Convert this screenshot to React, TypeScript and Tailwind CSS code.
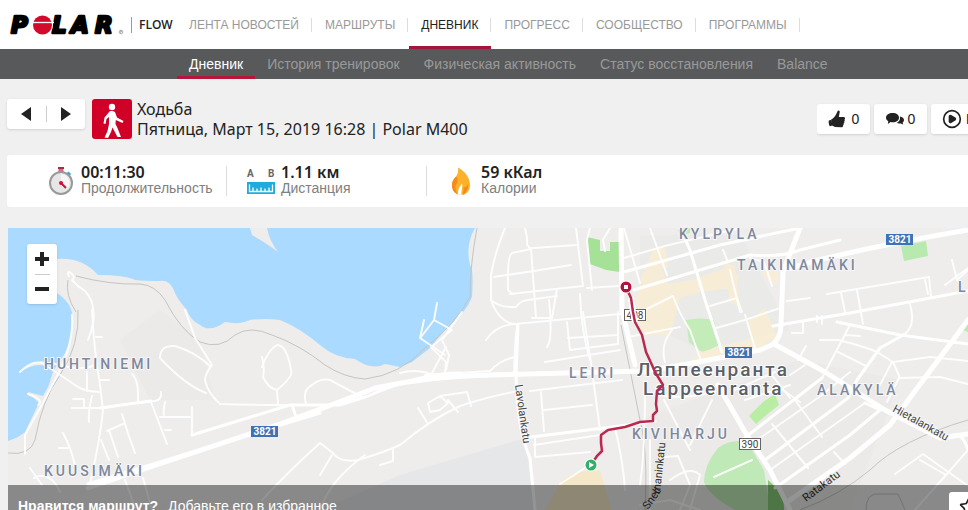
import React from 'react';
import { CirclePlay, Star } from 'lucide-react';

const MAIN_NAV = ['ЛЕНТА НОВОСТЕЙ', 'МАРШРУТЫ', 'ДНЕВНИК', 'ПРОГРЕСС', 'СООБЩЕСТВО', 'ПРОГРАММЫ'];
const SUB_NAV = ['Дневник', 'История тренировок', 'Физическая активность', 'Статус восстановления', 'Balance'];

const Logo = () => (
  <svg width="116" height="32" viewBox="8 8 116 32" role="img" aria-label="Polar" className="overflow-visible">
    <g fontFamily="DejaVu Sans, sans-serif" fontWeight="700" fontStyle="italic" fontSize="23" fill="#000" stroke="#000" strokeWidth="2.500" strokeLinejoin="round">
      <text x="11" y="32">P</text>
      <text x="52" y="32">L</text>
      <text x="71" y="32">A</text>
      <text x="95" y="32">R</text>
    </g>
    <circle cx="42.500" cy="24" r="10.500" fill="#fff" />
    <circle cx="42.500" cy="24" r="9.500" fill="#d40a2c" />
    <path d="M31 21.500H54" stroke="#fff" strokeWidth="1.300" />
    <circle cx="121" cy="31" r="1.800" fill="none" stroke="#777" strokeWidth=".6" />
    <path d="M120.500 32V30H121.500V31H120.500" fill="none" stroke="#777" strokeWidth=".4" />
  </svg>
);

const WalkIcon = () => (
  <svg width="40" height="40" viewBox="0 0 40 40" className="shrink-0 rounded-[3px] bg-[#d10027]" aria-hidden="true">
    <circle cx="20" cy="8" r="3.200" fill="#fff" />
    <path
      d="M17.500 12.500C19 11.800 21.500 11.800 23 13L25 18.500L31.500 22L30.500 24L23.800 21L23.500 25L25.500 29L29 38H25.500L20.500 28.500L19 33L16 39L12.500 38.500L15.500 32L17 25V18L14.500 20L13.500 25L11.500 24.500L12.500 18.500Z"
      fill="#fff"
      strokeLinejoin="round"
    />
  </svg>
);

const ThumbIcon = () => (
  <svg width="18" height="18" viewBox="0 0 18 18" fill="#222" aria-hidden="true">
    <path d="M9.800.8C11 .2 12 1 11.700 2.300L10.800 7H16C17.300 7.300 17.400 8.800 16.500 9.300C17 10 16.800 11 16.200 11.400C16.500 12.200 16.300 13 15.600 13.400C15.800 14.300 15.500 15 15 15.400C15.200 16.500 14.500 17.200 13.500 17.200L7.500 17C6 16.800 5 16 4 15.600L3.200 9.500C5.500 8.500 7.500 6 8.500 3.500Z" />
    <path d="M.8 10.500L3.500 9.700L4.500 15.500L1.800 16.300C1 15 .4 12.500 .8 10.500Z" />
  </svg>
);

const CommentsIcon = () => (
  <svg width="18" height="14" viewBox="0 0 18 14" fill="#222" aria-hidden="true">
    <path d="M13.800 4.500C16.500 4.800 18 6.200 18 8C18 9.200 17.400 10 16.700 10.600L17.200 12.600L14.800 11.500C13 11.800 11.500 11.500 10.500 10.800C13 10 14.600 7.600 13.800 4.500Z" />
    <path d="M6.700 1C10.500 1 13 3 13 5.700S10.500 10.300 6.700 10.300C6 10.300 5.200 10.200 4.600 10.100L1.800 12L2.300 9.200C.9 8.300 0 7.200 0 5.700C0 3 2.900 1 6.700 1Z" />
  </svg>
);

const StopwatchIcon = () => (
  <svg width="26" height="30" viewBox="0 0 26 30" aria-hidden="true">
    <path d="M10.500 3H15.500V6H10.500Z" fill="#c97288" />
    <path d="M10 1H16V3H10Z" fill="#a52a4b" />
    <path d="M19.500 6.500L22 9" stroke="#2ba8dc" strokeWidth="3" />
    <circle cx="13" cy="17" r="11" fill="#e6e6e6" stroke="#999" strokeWidth="2" />
    <path d="M13 8V17L19 23A9 9 0 0 0 13 8Z" fill="#f6f6f6" />
    <path d="M13 17L18 22" stroke="#d30b3f" strokeWidth="2" />
    <circle cx="13" cy="17" r="2" fill="#d30b3f" />
  </svg>
);

const DistanceIcon = () => (
  <svg width="28" height="28" viewBox="0 0 28 28" aria-hidden="true" className="overflow-visible">
    <g fontFamily="Roboto, sans-serif" fontWeight="700" fontSize="10" fill="#666">
      <text x="0" y="10">A</text>
      <text x="21" y="10">B</text>
    </g>
    <path d="M0 15H28V27H0Z" fill="#1fabdc" />
    <path d="M2.500 17.500V24.500H25.500V17.500M6 24V20.500M10 24V21.500M14 24V20.500M18 24V21.500M22 24V20.500" fill="none" stroke="#fff" strokeWidth="1.300" />
  </svg>
);

const FlameIcon = () => (
  <svg width="20" height="28" viewBox="0 0 20 28" aria-hidden="true">
    <path d="M7 .5C13.500 4 19 10.500 19 18C19 23 16.500 26 13 27.500H7C3.500 26 1 23 1 18.500C1 13.500 3 12 5 9.500C7 7 7.500 4 7 .5Z" fill="#fcb12b" />
    <path d="M1 18.500C1 14 3 12 5 9.500C7.500 12 7 15 5 18C4 20 4.500 24 7 27.500C3.500 26 1 23 1 18.500Z" fill="#f58b1f" />
    <path d="M13 27.500C16 25 17.500 21 17 17C16 19.500 14.500 20.500 12.500 20.500C13 22.500 12.500 25 11.500 27.500Z" fill="#f58b1f" />
    <path d="M11 16.500C9 19.500 6.500 22 7 27.500H10.500C10 24.500 12 20 11 16.500Z" fill="#fff" />
  </svg>
);

const STATS = [
  { icon: <StopwatchIcon />, value: '00:11:30', label: 'Продолжительность' },
  { icon: <DistanceIcon />, value: '1.11 км', label: 'Дистанция' },
  { icon: <FlameIcon />, value: '59 кКал', label: 'Калории' },
];

// Roads, grouped by width
const SMALL_ROADS = [
  // peninsula and Huhtiniemi
  'M69 276Q66 270 71 273Q76 277 72 280Q78 287 85 291Q93 300 93 309Q96 320 88 340',
  'M72 315Q74 340 60 370Q45 400 25 435L25 454',
  'M92 310Q94 350 100 385L103 410Q100 440 90 484',
  'M20 372Q32 360 42 363Q65 378 75 385Q82 391 99 392M52 363Q85 373 95 364',
  'M28 394Q45 400 38 405M73 399H84V408H73M72 408H104Q130 403 155 401Q162 400 161 392',
  'M92 396Q88 412 89 422M87 372V391M96 337H102M100 380H109M132 374Q139 380 138 402',
  'M151 402L167 444M165 402Q163 412 164 415M160 417H192M192 407V435M165 430H171',
  'M122 414Q128 435 135 453M107 431L123 424M109 430L118 457M101 440L109 460M63 433Q72 450 75 466M59 448H68',
  'M30 468L42 485M34 478Q50 470 60 492M125 480L136 510M143 478L152 510',
  'M185 310L195 338L212 365Q206 372 205 380Q207 392 220 404Q250 405 290 405',
  'M206 393Q185 385 160 358Q160 345 175 346Q195 352 210 366',
  'M262 357Q265 370 263 377Q268 388 277 390Q294 376 291 370Q287 345 277 345Q268 350 262 367M277 390L278 405M306 404Q302 390 312 385Q320 378 330 380L362 397',
  'M262 500Q290 470 320 443L333 453Q340 463 358 460Q385 452 400 445Q430 420 460 406Q490 396 514 392M320 510Q330 480 365 455M320 475L332 455M380 465L393 461V450',
  'M418 408L428 424M428 403L440 396L448 403L440 410L430 412L428 403M440 396L467 392L471 406M448 400L458 412',
  'M446 347L431 375M437 303L434 320L421 337M434 320L452 330L431 347L446 362L445 373',
  'M424 320L420 338L445 355M462 312L442 340L449 355L446 370',
  // Leiri and the blocks north of it
  'M505 228Q495 252 491 275V300Q500 325 518 324Q515 330 514 375',
  'M525 228Q528 240 527 245L531 249L512 253Q507 256 508 290L513 294',
  'M531 248L536 318M533 248L577 245M494 277L540 270L571 265M576 228L583 286L510 294M532 318H552L557 289',
  'M491 300Q500 308 516 307Q520 301 528 300L557 296M486 340Q496 325 515 324L620 314',
  'M590 228L587 240L592 290M620 350L545 362M580 294Q581 330 590 360M567 322L570 350L618 344V335',
  'M568 338L618 335V312M549 300Q553 340 547 347M610 228L603 240L605 251M587 288L618 286',
  'M530 391L622 380M541 392L544 431M544 410L592 405M534 445L600 435M535 437V457L590 452M560 484L588 466M615 428Q623 460 625 490',
  'M425 375L490 371Q500 360 515 357M400 373Q420 367 440 378M583 312L592 370L600 430',
  // centre
  'M624 228L640 283M650 228L667 275M624 258L665 246L740 228M723 250L728 262M730 270L740 312',
  'M645 310L673 296Q680 315 690 330L700 358M710 306L737 298L742 312M628 337L680 327M665 362Q660 345 672 330',
  'M716 328L745 320L780 308M745 315L755 348M750 258L764 262L772 286M645 390Q645 450 640 485M640 372L700 362',
  // Taikinamäki
  'M827 294L929 277L931 296M925 280L928 294M841 293L845 312M857 290L863 324M787 301L810 298M817 316V322M822 316V324M792 333H803V323',
  'M820 340H838Q860 345 877 352L893 362L930 357L968 361M850 325L822 378M838 352L866 366M845 335L860 336',
  'M893 362L900 378L940 377L968 384M892 362L880 385M899 378L887 402M910 304Q916 325 905 334M806 346L798 360',
  'M952 260L957 280L968 270M945 285L968 268',
  // Alakylä
  'M850 372L822 395L760 438M865 403L770 470M772 424L808 468M795 400L822 437M780 388L800 402M834 452L845 464',
  'M771 374L790 398M790 375L805 365M895 474L923 454L968 486M968 450L946 475L915 510M946 475L920 460',
  // Kiviharju
  'M660 395Q680 400 715 392M664 400L690 450M712 400L690 445M670 480Q690 465 700 475L690 510M714 477L752 460M665 457L678 456',
  'M678 456L690 485L680 510M650 440V510M700 510L670 500L640 505M735 390L775 372M745 400L790 385',
];

const MEDIUM_ROADS = [
  'M100 408L151 401M192 435L290 405H340L368 396Q420 373 460 373M88 484L320 413',
  'M518 325L516 375Q517 430 530 458L535 510M523 438L628 425L655 421',
  'M624 272L720 245L800 228M634 290L700 270L750 255Q780 258 800 250L840 240',
  'M680 228L690 250L705 300L722 352M773 326L850 313L968 291M837 322L900 335L968 344',
  'M822 378L760 426L742 440M905 334L880 348L857 380L848 398L765 460M880 410L850 435L775 488',
  'M865 403L880 410M292 405L296 417M968 450Q965 440 960 436',
];

const BIG_ROADS = [
  'M88 488L120 477L280 424Q340 402 375 388Q430 376 490 375L645 371Q680 366 760 350L772 345Q781 338 781 325L783 272L800 228',
  'M790 268Q850 250 968 230',
  'M774 344L825 372L885 410L940 438L968 434',
  'M718 385L745 432L770 470L790 510',
  'M621 228L622 310L635 365',
  'M968 320L912 395L890 425L850 458L790 500',
];

const DISTRICTS = [
  { x: 44, y: 369, text: 'HUHTINIEMI' },
  { x: 44, y: 476, text: 'KUUSIMÄKI' },
  { x: 569, y: 378, text: 'LEIRI' },
  { x: 679, y: 239, text: 'KYLPYLA' },
  { x: 737, y: 270, text: 'TAIKINAMÄKI' },
  { x: 817, y: 395, text: 'ALAKYLÄ' },
  { x: 632, y: 439, text: 'KIVIHARJU' },
  { x: 958, y: 292, text: 'L' },
];

const SHIELDS = [
  { x: 251, y: 426 },
  { x: 886, y: 234 },
  { x: 725, y: 347 },
];

const RouteMap = () => (
  <svg viewBox="8 228 960 300" preserveAspectRatio="xMinYMin slice" className="block h-full w-full" role="img" aria-label="Lappeenranta">
    <path d="M8 228H968V528H8Z" fill="#eeedec" />
    <g fill="#e9e8e7">
      <path d="M120 340L160 310L200 340L215 400H150Z" opacity=".7" />
      <path d="M320 510L400 475L525 438L535 510Z" fill="#e6e7e8" />
      <path d="M640 420L800 360L900 380L850 510H640Z" opacity=".7" />
      <path d="M640 235H740L790 330L700 350L640 320Z" opacity=".8" />
    </g>

    {/* Water */}
    <path
      d="M8 228H475Q465 245 470 265Q474 270 472 297Q466 313 447 327L430 348L412 362L400 367L385 364Q372 371 355 359Q335 358 320 345Q300 328 280 320Q265 318 250 320Q240 325 225 322Q210 333 200 325Q190 320 187 310Q178 300 175 293Q170 279 160 281Q145 281 135 280Q125 275 98 275Q82 257 57 259L45 270L57 293Q75 305 72 322Q73 345 59 362Q53 371 52 375L48 387L38 405L25 432Q20 437 8 441Z"
      fill="#aadaff"
    />
    <path d="M250 228H267Q269 240 278 252Q268 244 252 235Z" fill="#eeedec" />
    <path d="M19 373Q30 362 42 361L54 366L40 365Q30 365 19 373ZM28 392L43 396L40 405Q36 398 28 395Z" fill="#eeedec" />

    {/* Parks */}
    <g fill="#b8eab0">
      <path d="M587 237L600 240V251H610V242H620V272L606 270L590 264Z" fill="#a5e297" />
      <path d="M686 320Q700 317 714 320L719 345L703 353L689 342Z" fill="#c4ecb8" />
      <path d="M901 246L926 241L928 256L904 261Z" />
      <path d="M749 416L763 402L775 394L779 405L770 412L756 424Z" fill="#b9eda4" />
      <path d="M718 448Q728 440 742 441L752 450L764 470L770 510H735Q708 495 704 482Q704 465 718 448Z" fill="#bfe9b6" />
      <path d="M768 480Q785 495 784 510H768Z" fill="#86ca78" />
      <path d="M678 230L690 228V233L680 235ZM963 330L968 322V332Z" />
    </g>

    {/* Built-up areas */}
    <g fill="#fcefd0" opacity=".75">
      <path d="M643 272L660 266L668 284L692 280L725 268L740 276L730 288L700 292L680 298L670 335L640 335L636 300Z" />
      <path d="M643 270L648 262L655 246L665 248L668 268ZM724 262L735 266L740 308L730 302ZM747 322L765 308L770 320L777 338L752 347Z" />
      <path d="M700 352L750 340L770 345L720 358L690 362Z" />
      <path d="M762 272L778 270V284L770 283Z" />
      <path d="M560 483Q575 468 600 471L612 510H545Z" fill="#f7e7bd" />
    </g>

    {/* Railway and footpaths */}
    <g fill="none" stroke="#c4c4c4" strokeWidth="1">
      <path d="M477 228Q470 265 470 297Q455 325 425 348Q400 375 365 379Q345 378 325 365Q300 345 272 335Q250 325 235 335Q220 350 200 342Q180 330 165 300Q155 285 140 284Q110 285 76 276" />
      <path d="M621 325L640 420Q648 450 645 510M968 420Q900 440 870 470Q840 495 800 510M78 310Q80 345 60 375Q42 400 35 440Q30 456 8 453M68 280Q65 295 76 312" />
      <path d="M866 510Q866 492 880 494H898Q901 500 905 510" />
    </g>

    <g fill="none" stroke="#fff" strokeLinejoin="round" strokeLinecap="round">
      <g strokeWidth="2" opacity=".9">
        {SMALL_ROADS.map((d) => <path key={d} d={d} />)}
      </g>
      <g strokeWidth="3">
        {MEDIUM_ROADS.map((d) => <path key={d} d={d} />)}
      </g>
      <g strokeWidth="5">
        {BIG_ROADS.map((d) => <path key={d} d={d} />)}
      </g>
    </g>

    {/* Labels */}
    <g fontFamily="Roboto, sans-serif" fontSize="14" fontWeight="500" fill="#7e879b" className="tracking-[3px]" stroke="#f7f7f7" strokeWidth="2" paintOrder="stroke">
      {DISTRICTS.map((d) => <text key={d.text} x={d.x} y={d.y}>{d.text}</text>)}
    </g>
    <g fontFamily="Roboto, sans-serif" fontSize="19" fontWeight="500" fill="#5c5f66" className="tracking-[2px]" stroke="#fff" strokeWidth="2" paintOrder="stroke">
      <text x="637" y="376">Лаппеенранта</text>
      <text x="643" y="395">Lappeenranta</text>
    </g>
    <g fontFamily="Roboto, sans-serif" fontSize="11" fill="#444" stroke="#f7f7f7" strokeWidth="2" paintOrder="stroke">
      <text transform="translate(515 385) rotate(82)">Lavolankatu</text>
      <text transform="translate(892 411) rotate(29)">Hietalankatu</text>
    </g>
    <g fontFamily="Roboto, sans-serif" fontSize="10" textAnchor="middle">
      {SHIELDS.map((s) => (
        <g key={s.x}>
          <rect x={s.x} y={s.y} width="27" height="11" fill="#3f72b5" />
          <text x={s.x + 14} y={s.y + 9} fill="#fff" fontWeight="700">3821</text>
        </g>
      ))}
      <rect x="624.500" y="309.500" width="21" height="11" fill="#fff" stroke="#666" />
      <text x="635" y="319" fill="#444">408</text>
      <rect x="739.500" y="438.500" width="21" height="11" fill="#fff" stroke="#666" />
      <text x="750" y="448" fill="#444">390</text>
    </g>
    <g fontFamily="Roboto, sans-serif" fontSize="11" fill="#333">
      <text transform="translate(806 502) rotate(-37)">Ratakatu</text>
      <text transform="translate(648 510) rotate(-55)">Snell</text>
      <text transform="translate(660 494) rotate(-84)">maninkatu</text>
    </g>

    {/* Recorded route */}
    <g fill="none" strokeLinejoin="round">
      <path d="M631 298L633 312L635 322" stroke="#fff" strokeWidth="6" />
      <path
        d="M626 287L631 298L633 312L635 322L642 335L646 352L652 365L655 372L663 385L657 391L656 404L657 411L653 415V421L640 422L625 427L608 430L601 435V443L602 451L597 456L591 465"
        stroke="#b92a50"
        strokeWidth="2.500"
      />
    </g>
    <circle cx="626" cy="287" r="6.500" fill="#fff" />
    <circle cx="626" cy="287" r="5.500" fill="#b3143f" />
    <path d="M624 285H628V289H624Z" fill="#fff" />
    <circle cx="591" cy="465" r="6.500" fill="#fff" />
    <circle cx="591" cy="465" r="5.500" fill="#32b06b" />
    <path d="M589 462L594 465L589 468Z" fill="#fff" />
  </svg>
);

const App: React.FC = () => {
  return (
    <div className="h-screen overflow-hidden bg-[#f0f0f0] font-['Liberation_Sans',sans-serif] text-[#222]">
      <header className="flex h-[49px] items-center bg-white">
        <a href="#" className="ml-2 shrink-0">
          <Logo />
        </a>
        <a href="#" className="ml-[7px] w-[46px] shrink-0 border-l border-[#999] pl-[7px] font-['Open_Sans',sans-serif] text-[12px] leading-4 font-semibold">
          FLOW
        </a>
        <nav className="flex h-full shrink-0 gap-px">
          {MAIN_NAV.map((item) => (
            <a
              key={item}
              href="#"
              className={`flex h-full items-center border-b-[3px] pt-[3px] text-[12px] leading-[14px] whitespace-nowrap ${item === 'ДНЕВНИК' ? 'border-[#a3163a] text-[#222]' : 'border-transparent text-[#999]'}`}
            >
              <span className="border-r border-[#ddd] px-3">{item}</span>
            </a>
          ))}
        </nav>
      </header>

      <nav className="flex h-[30px] bg-[#58595b] pl-[177px]">
        {SUB_NAV.map((item, i) => (
          <a
            key={item}
            href="#"
            className={`flex shrink-0 items-center border-b-[3px] px-3 pt-[3px] text-[14px] whitespace-nowrap ${i === 0 ? 'border-[#b5173c] text-white' : 'border-transparent text-[#999]'}`}
          >
            {item}
          </a>
        ))}
      </nav>

      <main className="pt-5 pl-[7px]">
        <div className="flex items-start">
          <div className="flex h-[30px] w-[78px] shrink-0 items-center rounded-[3px] bg-white shadow-sm">
            <button aria-label="Назад" className="flex flex-1 justify-center">
              <svg width="12" height="16" viewBox="0 0 12 16"><path d="M11 1V15L1 8Z" fill="#222" /></svg>
            </button>
            <span className="h-4 w-px bg-[#ccc]" />
            <button aria-label="Вперёд" className="flex flex-1 justify-center">
              <svg width="12" height="16" viewBox="0 0 12 16"><path d="M1 1V15L11 8Z" fill="#222" /></svg>
            </button>
          </div>
          <div className="ml-[7px] flex flex-1 gap-[5px]">
            <WalkIcon />
            <h1 className="font-['Noto_Sans',sans-serif] text-[16px] leading-5 whitespace-nowrap">
              Ходьба
              <br />
              Пятница, Март 15, 2019 16:28 | Polar M400
            </h1>
          </div>
          <div className="mt-[5px] flex w-[151px] shrink-0 gap-1 overflow-x-clip text-[14px]">
            <button className="flex h-[30px] w-[53px] shrink-0 items-center justify-center gap-[6px] rounded-[3px] bg-white shadow-sm">
              <ThumbIcon />0
            </button>
            <button className="flex h-[30px] w-[53px] shrink-0 items-center justify-center gap-1 rounded-[3px] bg-white shadow-sm">
              <CommentsIcon />0
            </button>
            <button className="flex h-[30px] shrink-0 items-center gap-1 rounded-[3px] bg-white px-[11px] shadow-sm">
              <CirclePlay size={20} strokeWidth={2} color="#222" fill="none" className="[&>path]:fill-[#222] [&>polygon]:fill-[#222]" />
              Relive
            </button>
          </div>
        </div>

        <section className="mt-4 flex h-[52px] items-center rounded-l-[3px] bg-white pl-5">
          {STATS.map((s, i) => (
            <div key={s.label} className={`flex h-[30px] w-[200px] items-center gap-[6px] pl-5 ${i < 2 ? 'border-r border-[#ddd]' : ''}`}>
              <div className="flex w-7 shrink-0 justify-center">{s.icon}</div>
              <div className="pb-[2px]">
                <div className="font-['Noto_Sans',sans-serif] text-[16px] leading-4 font-semibold">{s.value}</div>
                <div className="text-[14px] leading-4 text-[#808080]">{s.label}</div>
              </div>
            </div>
          ))}
        </section>

        <section className="relative mt-[21px] ml-px h-[300px] overflow-hidden">
          <RouteMap />
          <div className="absolute top-4 left-[19px] flex h-[60px] w-[30px] flex-col items-center rounded-[3px] bg-white shadow-sm">
            <button aria-label="Приблизить" className="flex flex-1 items-center">
              <svg width="14" height="14" viewBox="0 0 14 14"><path d="M0 7H14M7 0V14" stroke="#222" strokeWidth="4" /></svg>
            </button>
            <span className="h-px w-[15px] bg-[#ccc]" />
            <button aria-label="Отдалить" className="flex flex-1 items-center">
              <svg width="14" height="14" viewBox="0 0 14 14"><path d="M0 7H14" stroke="#222" strokeWidth="4" /></svg>
            </button>
          </div>
          <div className="absolute inset-x-0 bottom-0 flex h-[43px] items-center justify-between bg-black/42 pl-[10px] text-[14px] text-white">
            <p className="whitespace-nowrap">
              <strong className="mr-[10px]">Нравится маршрут?</strong>
              Добавьте его в избранное
            </p>
            <div className="flex w-[19px] shrink-0 overflow-hidden">
              <button aria-label="В избранное" className="flex h-[30px] w-10 shrink-0 items-center justify-center rounded-[3px] bg-white">
                <Star size={20} color="#222" />
              </button>
            </div>
          </div>
        </section>
      </main>
    </div>
  );
};

export default App;
